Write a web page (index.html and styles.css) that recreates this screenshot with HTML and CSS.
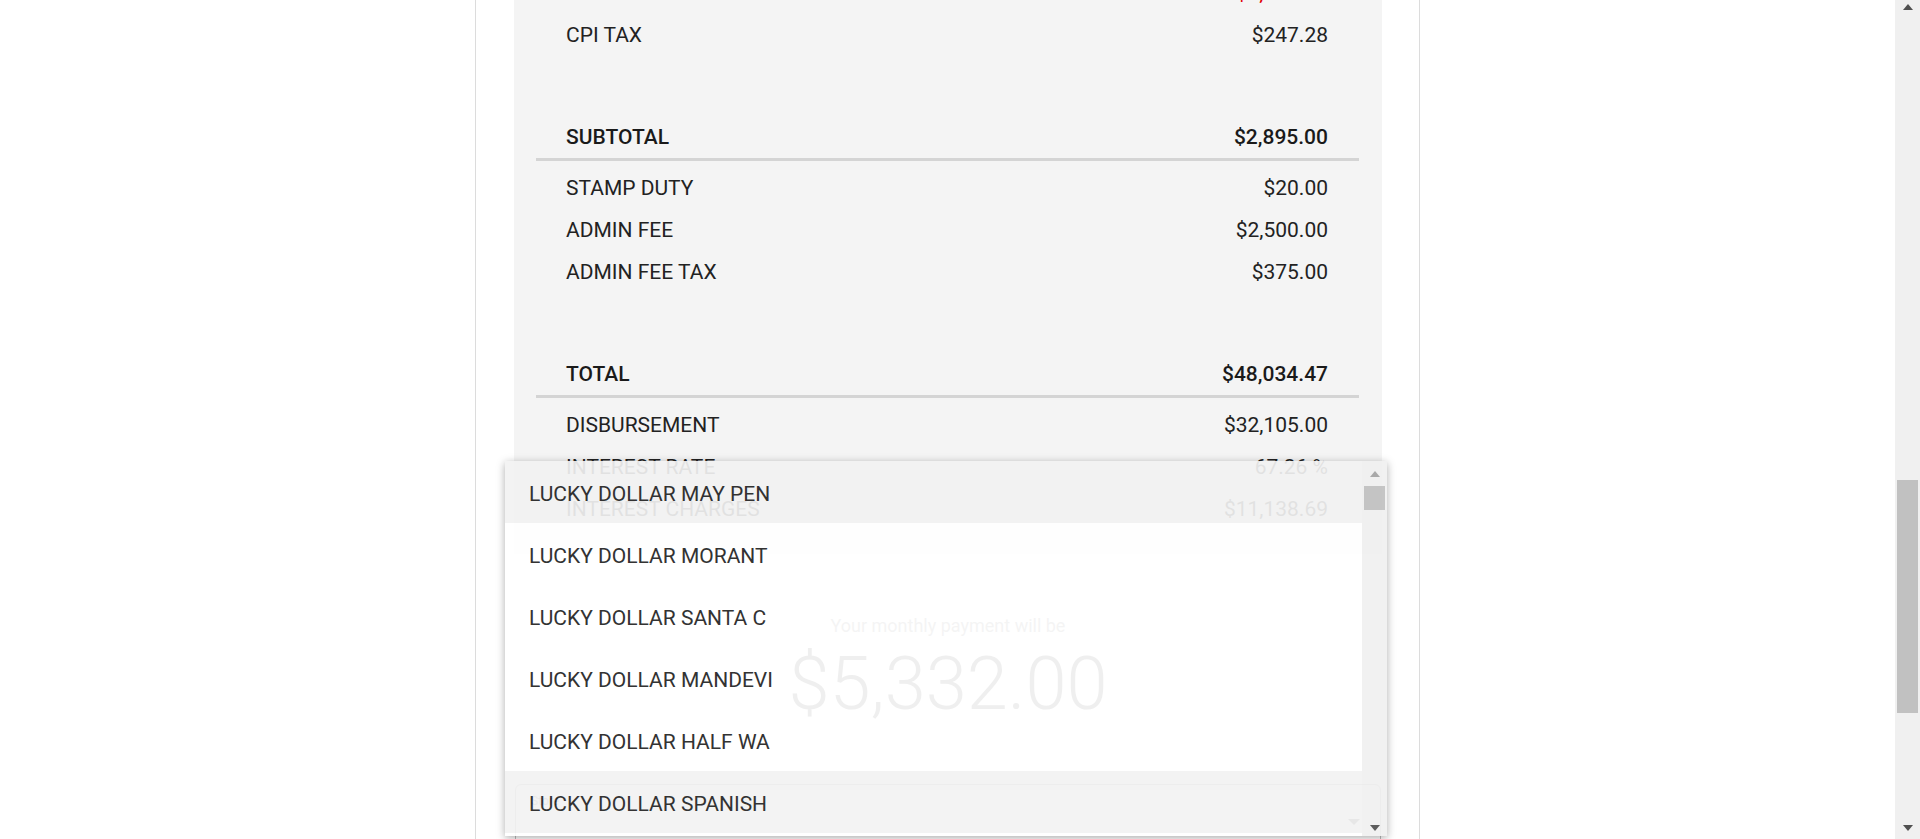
FILE: index.html
```html
<!DOCTYPE html>
<html lang="en">
<head>
<meta charset="utf-8">
<title>Loan summary</title>
<link rel="stylesheet" href="styles.css">
</head>
<body>
<div class="viewport">
  <main class="page">
    <div class="card">
      <div class="card-scroll">
        <section class="panel">
          <div class="group">
            <div class="row"><span>DISCOUNT</span><span class="neg">$1,450.00</span></div>
            <div class="row"><span>CPI TAX</span><span>$247.28</span></div>
          </div>
          <div class="row head"><span>SUBTOTAL</span><span>$2,895.00</span></div>
          <div class="group after-head">
            <div class="row"><span>STAMP DUTY</span><span>$20.00</span></div>
            <div class="row"><span>ADMIN FEE</span><span>$2,500.00</span></div>
            <div class="row"><span>ADMIN FEE TAX</span><span>$375.00</span></div>
          </div>
          <div class="row head"><span>TOTAL</span><span>$48,034.47</span></div>
          <div class="group after-head">
            <div class="row"><span>DISBURSEMENT</span><span>$32,105.00</span></div>
            <div class="row"><span>INTEREST RATE</span><span>67.26 %</span></div>
            <div class="row"><span>INTEREST CHARGES</span><span>$11,138.69</span></div>
          </div>
        </section>
        <section class="payment">
          <p class="payment-label">Your monthly payment will be</p>
          <p class="payment-amount">$5,332.00</p>
        </section>
        <div class="field">
          <span class="field-label">Store</span>
          <span class="field-arrow"></span>
        </div>
      </div>
    </div>

    <div class="dropdown">
      <ul class="dd-list">
        <li class="dd-item active">LUCKY DOLLAR MAY PEN</li>
        <li class="dd-item">LUCKY DOLLAR MORANT</li>
        <li class="dd-item">LUCKY DOLLAR SANTA C</li>
        <li class="dd-item">LUCKY DOLLAR MANDEVI</li>
        <li class="dd-item">LUCKY DOLLAR HALF WA</li>
        <li class="dd-item active">LUCKY DOLLAR SPANISH</li>
      </ul>
      <div class="dd-scroll">
        <span class="arrow-up light"></span>
        <span class="dd-thumb"></span>
        <span class="arrow-down dd-down"></span>
      </div>
    </div>
  </main>
  <div class="scrollbar">
    <span class="arrow-up main-up"></span>
    <span class="sb-thumb"></span>
    <span class="arrow-down main-down"></span>
  </div>
</div>
</body>
</html>
```

FILE: styles.css
```css
html, body {
  margin: 0;
  padding: 0;
  background: #ffffff;
  font-family: Roboto, "Liberation Sans", Arial, sans-serif;
  overflow: hidden;
}

.viewport {
  display: flex;
  height: 839px;
  overflow: hidden;
}

.page {
  flex: 1;
  position: relative;
  overflow: hidden;
}

.card {
  display: flow-root;
  width: 945px;
  height: 100%;
  box-sizing: border-box;
  margin: 0 auto;
  padding: 0 37px 0 38px;
  border-left: 1px solid #dcdcdc;
  border-right: 1px solid #dcdcdc;
}

.card-scroll {
  margin-top: -28px;
}

.panel {
  background: #f4f4f4;
  padding: 0 23px 24px 22px;
}

.row {
  display: flex;
  justify-content: space-between;
  padding: 0 31px 0 30px;
  font-size: 21px;
  line-height: 42px;
  color: #222222;
}

.row.head {
  margin-top: 60px;
  font-weight: 500;
  color: #1a1a1a;
  border-bottom: 3px solid #d4d4d4;
}

.group.after-head {
  margin-top: 6px;
}

.neg {
  color: #e10000;
}

.payment {
  padding-top: 60px;
  text-align: center;
}

.payment-label {
  margin: 0;
  font-size: 18px;
  line-height: 24px;
  color: #777777;
}

.payment-amount {
  margin: 6px 0 0;
  font-size: 74px;
  line-height: 80px;
  font-weight: 300;
  color: #333333;
}

.field {
  margin: 60px 1px 0;
  height: 70px;
  box-sizing: border-box;
  border: 1px solid #bdbdbd;
  border-radius: 6px;
  display: flex;
  justify-content: space-between;
  align-items: flex-start;
  padding: 8px 20px 0 15px;
}

.field-label {
  font-size: 12px;
  line-height: 16px;
  color: #888888;
}

.field-arrow {
  margin-top: 26px;
  width: 0;
  height: 0;
  border-left: 6.5px solid transparent;
  border-right: 6.5px solid transparent;
  border-top: 6px solid #666666;
}

/* open select list (overlay) */
.dropdown {
  position: absolute;
  left: 505px;
  top: 461px;
  width: 882px;
  height: 375px;
  display: flex;
  background: #ffffff;
  opacity: 0.92;
  box-shadow: 0 2px 8px rgba(0, 0, 0, 0.35);
}

.dd-list {
  flex: 1;
  margin: 0;
  padding: 0;
  list-style: none;
}

.dd-item {
  height: 62px;
  box-sizing: border-box;
  padding: 3px 0 0 24px;
  display: flex;
  align-items: center;
  font-size: 21px;
  color: #222222;
}

.dd-item.active {
  background: #f2f2f2;
}

.dd-scroll {
  width: 25px;
  background: #f0f0f0;
  display: flex;
  flex-direction: column;
  align-items: center;
}

.arrow-up,
.arrow-down {
  width: 0;
  height: 0;
  border-left: 5.5px solid transparent;
  border-right: 5.5px solid transparent;
}

.arrow-up {
  margin-top: 10px;
  border-bottom: 6px solid #505050;
}

.arrow-up.light {
  border-bottom-color: #a3a3a3;
}

.arrow-down {
  margin-top: auto;
  margin-bottom: 5px;
  border-top: 6px solid #505050;
}

.dd-thumb {
  margin-top: 9px;
  width: 21px;
  height: 24px;
  background: #c1c1c1;
}

.scrollbar {
  width: 25px;
  flex: none;
  background: #f0f0f0;
  display: flex;
  flex-direction: column;
  align-items: center;
}

.arrow-up.main-up {
  margin-top: 4px;
}

.sb-thumb {
  margin-top: 470px;
  width: 21px;
  height: 233px;
  background: #c1c1c1;
}

.arrow-down.main-down {
  margin-bottom: 8px;
}
```
